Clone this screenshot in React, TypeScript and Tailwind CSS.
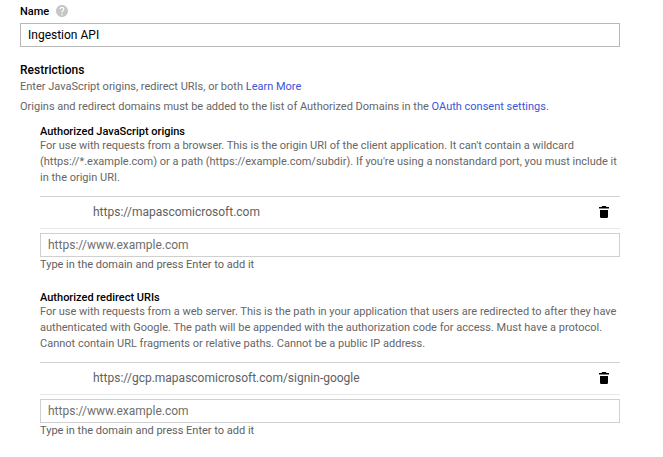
function Trash() {
  return (
    <svg width="10" height="12" viewBox="0 0 10 12" className="mr-[11px] block" fill="#000">
      <path d="M0 1h2.5l.7-1h3.6l.7 1H10v1.5H0zM1 4h8v6.8A1.2 1.2 0 0 1 7.8 12H2.2A1.2 1.2 0 0 1 1 10.8z" />
    </svg>
  );
}

function Help() {
  return (
    <svg width="12" height="12" viewBox="2 2 20 20" className="block" fill="#c6c6c6">
      <path d="M12 2C6.48 2 2 6.48 2 12s4.48 10 10 10 10-4.48 10-10S17.52 2 12 2zm1 17h-2v-2h2v2zm2.07-7.75l-.9.92C13.45 12.9 13 13.5 13 15h-2v-.5c0-1.1.45-2.1 1.17-2.83l1.24-1.26c.37-.36.59-.86.59-1.41 0-1.1-.9-2-2-2s-2 .9-2 2H8c0-2.21 1.79-4 4-4s4 1.79 4 4c0 .88-.36 1.68-.93 2.25z" />
    </svg>
  );
}

type GroupProps = { title: string; lines: string[]; uri: string };

function Group({ title, lines, uri }: GroupProps) {
  return (
    <section>
      <h3 className="h-[13px] whitespace-nowrap text-[11px] leading-[14px] font-medium text-black">{title}</h3>
      <div className="text-[11px] leading-4 whitespace-nowrap text-[#666]">
        {lines.map((l) => (
          <p key={l}>{l}</p>
        ))}
      </div>
      <div className="mt-[10px] flex h-[33px] items-center justify-between border-y border-t-[#d2d2d2] border-b-[#e8e8e8] pb-px pl-[53px] text-xs text-[#616161]">
        <span>{uri}</span>
        <Trash />
      </div>
      <input
        className="mt-1 block h-6 w-full border border-[#d0d0d0] px-[7px] text-xs text-black outline-none placeholder:text-[#6e6e6e]"
        placeholder="https://www.example.com"
      />
      <p className="h-4 text-[11px] leading-4 text-[#616161]">Type in the domain and press Enter to add it</p>
    </section>
  );
}

export default function App() {
  return (
    <main className="h-[457px] w-[663px] overflow-hidden bg-white pt-[5px] pl-5 font-[Roboto,sans-serif]">
      <div className="w-[600px]">
        <label className="flex h-3 items-center gap-[7px] text-[11px] leading-3 font-medium text-black">
          <span className="pt-0.5">Name</span>
          <Help />
        </label>
        <input className="mt-1.5 block h-6 w-full border border-[#b8b8b8] px-[7px] text-xs text-black outline-none" defaultValue="Ingestion API" />
        <h2 className="mt-[15px] h-4 text-xs leading-4 font-medium text-black">Restrictions</h2>
        <p className="mt-px text-[11px] leading-4 text-[#666]">
          Enter JavaScript origins, redirect URIs, or both <a className="text-[#3b55d9]">Learn More</a>
        </p>
        <p className="mt-1 text-[11px] leading-4 text-[#666]">
          Origins and redirect domains must be added to the list of Authorized Domains in the <a className="text-[#3b55d9]">OAuth consent settings</a>.
        </p>
        <div className="mt-[10px] flex flex-col gap-[18px] pl-5">
          <Group
            title="Authorized JavaScript origins"
            lines={[
              "For use with requests from a browser. This is the origin URI of the client application. It can't contain a wildcard",
              "(https://*.example.com) or a path (https://example.com/subdir). If you're using a nonstandard port, you must include it",
              "in the origin URI.",
            ]}
            uri="https://mapascomicrosoft.com"
          />
          <Group
            title="Authorized redirect URIs"
            lines={[
              "For use with requests from a web server. This is the path in your application that users are redirected to after they have",
              "authenticated with Google. The path will be appended with the authorization code for access. Must have a protocol.",
              "Cannot contain URL fragments or relative paths. Cannot be a public IP address.",
            ]}
            uri="https://gcp.mapascomicrosoft.com/signin-google"
          />
        </div>
      </div>
    </main>
  );
}
